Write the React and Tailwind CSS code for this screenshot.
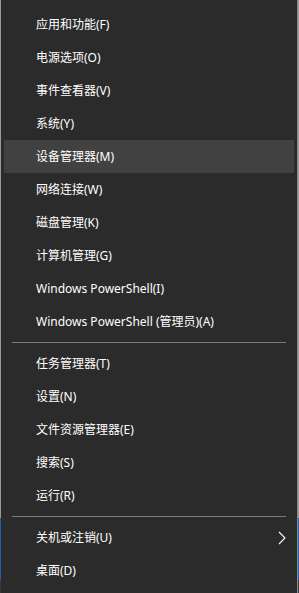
import React from 'react';

const groups = [
  [
    '应用和功能(F)',
    '电源选项(O)',
    '事件查看器(V)',
    '系统(Y)',
    '设备管理器(M)',
    '网络连接(W)',
    '磁盘管理(K)',
    '计算机管理(G)',
    'Windows PowerShell(I)',
    'Windows PowerShell (管理员)(A)',
  ],
  ['任务管理器(T)', '设置(N)', '文件资源管理器(E)', '搜索(S)', '运行(R)'],
  ['关机或注销(U)', '桌面(D)'],
];

const Chevron = () => (
  <svg width="8" height="14" viewBox="0 0 8 14" fill="none">
    <path d="M1 1 L7 7 L1 13" stroke="#ffffff" strokeWidth="1.1" />
  </svg>
);

const Strip = ({ w }) => (
  <div className={`flex flex-col ${w}`}>
    <div className="h-[518px] bg-[#9a9a9a]" />
    <div className="h-[62px] bg-[#1f5fa8]" />
    <div className="flex-1 bg-[#3a3a3a]" />
  </div>
);

export default function App() {
  return (
    <div
      className="flex w-[299px] h-[593px] overflow-hidden"
      style={{ fontFamily: '"Noto Sans", "Noto Sans CJK SC", sans-serif' }}
    >
      <Strip w="w-[1px]" />
      <div className="flex-1 bg-[#2b2b2b] border-r border-[#8c8c8c] flex flex-col pt-2">
        {groups.map((items, gi) => (
          <div key={gi}>
            {gi > 0 && <div className="h-px bg-[#7b7b7b] mx-[11px] my-1" />}
            {items.map((label) => (
              <div
                key={label}
                className={`h-[33px] mx-[3px] flex items-center justify-between pl-[32px] pr-[8px] text-[12px] text-white ${
                  label === '设备管理器(M)' ? 'bg-[#414141]' : ''
                }`}
              >
                <span>{label}</span>
                {label === '关机或注销(U)' && <Chevron />}
              </div>
            ))}
          </div>
        ))}
      </div>
      <Strip w="w-[1px]" />
    </div>
  );
}
